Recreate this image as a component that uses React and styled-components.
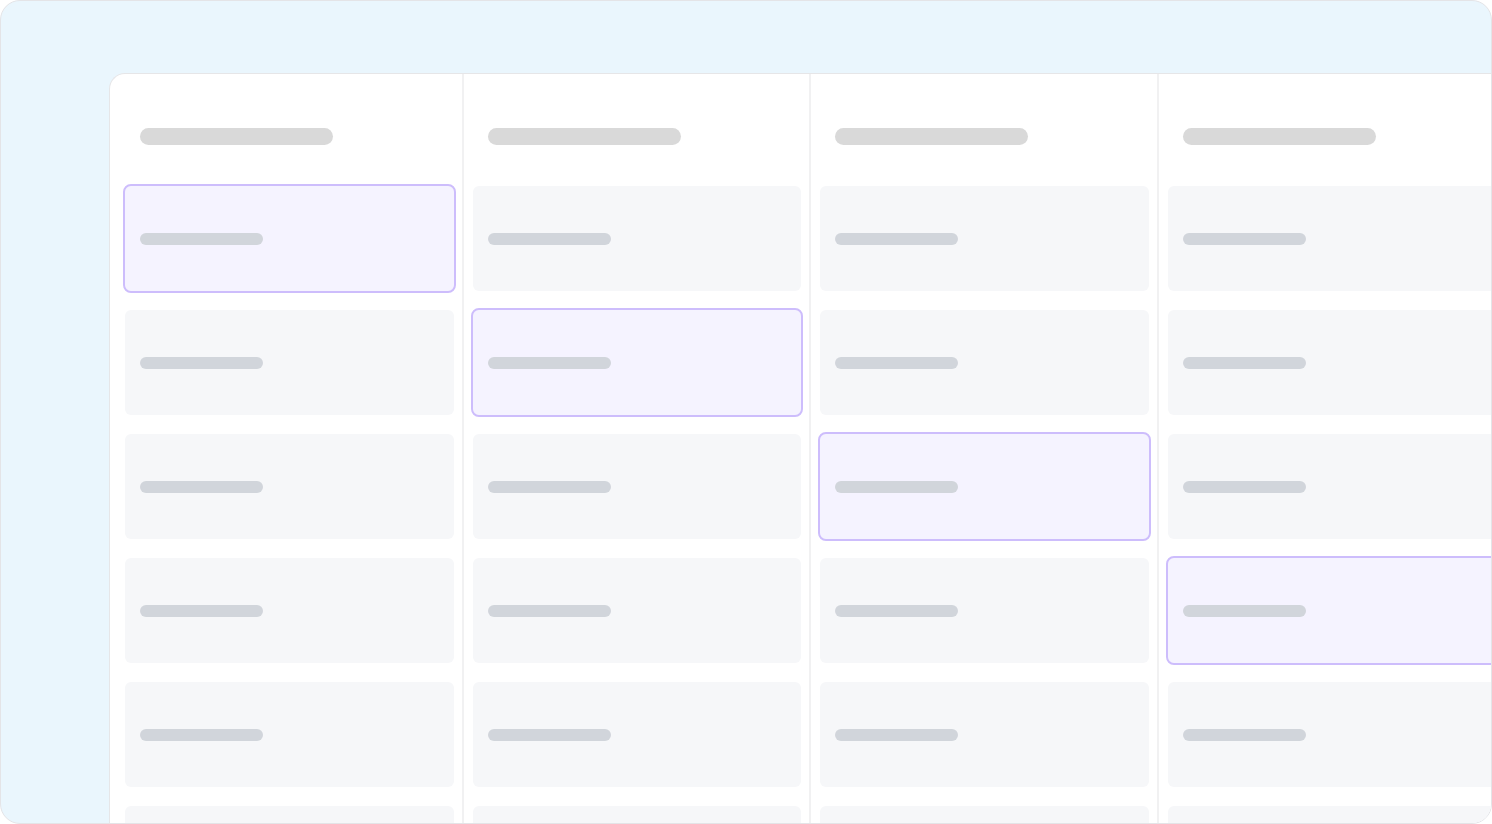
import styled, { createGlobalStyle } from 'styled-components';

const GlobalStyle = createGlobalStyle`
  html, body {
    margin: 0;
    padding: 0;
    background: #ffffff;
    font-family: Inter, "Liberation Sans", sans-serif;
  }
  * {
    box-sizing: border-box;
  }
`;

const Frame = styled.div`
  width: 1492px;
  height: 824px;
  border: 1px solid #e4e4e7;
  border-radius: 20px;
  background: #eaf6fd;
  overflow: hidden;
  display: flex;
  padding: 72px 0 0 108px;
`;

const Board = styled.div`
  flex: 1;
  display: flex;
  background: #ffffff;
  border: 1px solid #e6e6e8;
  border-right: none;
  border-bottom: none;
  border-top-left-radius: 16px;
  padding-left: 6px;
  min-width: 0;
`;

const Column = styled.div`
  flex: 0 0 347.5px;
  display: flex;
  flex-direction: column;
  border-right: 2px solid #f1f1f2;
  padding: 0 8px 0 9px;
`;

const Header = styled.div`
  flex: 0 0 112px;
  padding: 54px 0 0 15px;
`;

const HeaderBar = styled.div`
  width: 193px;
  height: 17px;
  border-radius: 9px;
  background: #d9d9d9;
`;

const CardList = styled.div`
  flex-shrink: 0;
  display: flex;
  flex-direction: column;
  gap: 19px;
`;

const Card = styled.div`
  height: 105px;
  flex: 0 0 105px;
  border-radius: 6px;
  display: flex;
  align-items: center;
  padding-left: 15px;
  background: ${(p) => (p.$active ? '#f5f3ff' : '#f6f7f9')};
  outline: ${(p) => (p.$active ? '2px solid #cdbdfc' : 'none')};
  outline-offset: -0.5px;
`;

const CardBar = styled.div`
  width: 123px;
  height: 12px;
  border-radius: 6px;
  background: #d1d5db;
`;

const columns = [0, 1, 2, 3, 4];
const rows = [0, 1, 2, 3, 4, 5, 6];

const App = () => {
  return (
    <>
      <GlobalStyle />
      <Frame>
        <Board>
          {columns.map((c) => (
            <Column key={c}>
              <Header>
                <HeaderBar />
              </Header>
              <CardList>
                {rows.map((r) => (
                  <Card key={r} $active={r === c}>
                    <CardBar />
                  </Card>
                ))}
              </CardList>
            </Column>
          ))}
        </Board>
      </Frame>
    </>
  );
};

export default App;
